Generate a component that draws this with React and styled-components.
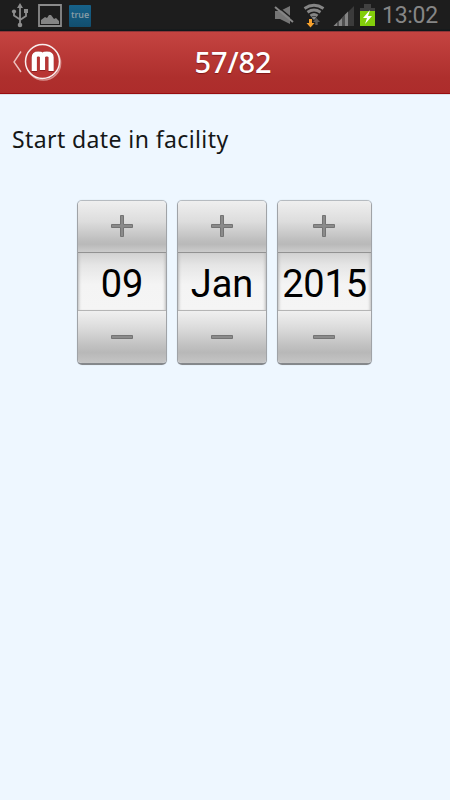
import React from "react";
import styled, { createGlobalStyle } from "styled-components";

const GlobalStyle = createGlobalStyle`
  * { box-sizing: border-box; }
  body { margin: 0; background: #eef7ff; }
`;

const Screen = styled.div`
  display: flex;
  flex-direction: column;
  width: 450px;
  height: 800px;
  overflow: hidden;
  background: #eef7ff;
`;

const StatusBar = styled.div`
  display: flex;
  justify-content: space-between;
  flex: none;
  height: 31px;
  background: linear-gradient(#1d1d1d 0 29px, #10181b 30px);
`;

const StatusGroup = styled.div`
  display: flex;
  align-items: flex-start;
`;

const StatusSvg = styled.svg`
  display: block;
  flex: none;
`;

const TrueBadge = styled.div`
  display: flex;
  justify-content: center;
  width: 22px;
  height: 22px;
  margin-top: 5px;
  border-radius: 1px;
  background: linear-gradient(#17628a, #124e6e);
  color: #8a9da7;
  font: 600 9px/20px "Open Sans", sans-serif;
  letter-spacing: -0.1px;
`;

const Clock = styled.div`
  width: 68px;
  color: #868686;
  font: 400 23px/31px Roboto, sans-serif;
  letter-spacing: -0.3px;
`;

const Header = styled.header`
  display: grid;
  grid-template-columns: 64px 1fr 48px;
  flex: none;
  height: 63px;
  border-top: 1px solid #8e3437;
  border-bottom: 1px solid #980d10;
  background: linear-gradient(#c54441, #ae2f2d 75%, #ad2c2b);
`;

const Title = styled.h1`
  margin: 0;
  color: #fff;
  text-align: center;
  font: 500 29px/60px "Noto Sans", sans-serif;
  letter-spacing: -0.1px;
  text-shadow: 0 1px 1px rgba(80, 0, 0, 0.5);
`;

const Content = styled.main`
  display: flex;
  flex-direction: column;
  border-top: 1px solid #dce1e8;
`;

const Question = styled.p`
  margin: 26px 0 0 12px;
  color: #151718;
  font: 400 23px/36px "Noto Sans", sans-serif;
  letter-spacing: ${(p) => p.$tracking};
  white-space: nowrap;
`;

const DatePicker = styled.div`
  display: flex;
  gap: 10px;
  margin: 43px 0 0 77px;
`;

const Picker = styled.div`
  display: flex;
  flex-direction: column;
  width: ${(p) => p.$width}px;
  height: 165px;
  overflow: hidden;
  border: 1px solid #a0a3a7;
  border-top-color: #b6bbc0;
  border-bottom: 2px solid #85888b;
  border-radius: 5px;
  box-shadow: 0 0 1px rgba(100, 120, 140, 0.35);
`;

const StepButton = styled.button`
  display: flex;
  justify-content: center;
  align-items: flex-start;
  flex: none;
  height: ${(p) => (p.$down ? 52 : 51)}px;
  padding: ${(p) => (p.$down ? 14 : 13)}px ${(p) => p.$nudge || 0}px 0 0;
  border: 0;
  background: ${(p) =>
    p.$down
      ? "linear-gradient(#f0f0f0, #dddddd 30%, #c2c2c2 65%, #b8b8b8 80%, #c5c5c5)"
      : "linear-gradient(#efefef, #dddddd 40%, #bdbdbd 78%, #b9b9b9 85%, #cccccc)"};
`;

const Value = styled.div`
  flex: none;
  height: 59px;
  border-top: 1px solid #929292;
  border-bottom: 1px solid #b5b5b5;
  background: linear-gradient(#d2d2d2, #e6e6e6 22%, #f4f4f4 55%, #f5f5f5);
  box-shadow: inset 3px 0 3px -2px #bbb, inset -3px 0 3px -2px #bbb;
  color: #000;
  text-align: center;
  white-space: nowrap;
  font: 400 38px/62px Roboto, sans-serif;
  letter-spacing: ${(p) => p.$tracking || 0}px;
`;

function UsbIcon() {
  return (
    <StatusSvg width="38" height="31" viewBox="0 0 38 31" fill="none" stroke="#8d8d8d" strokeWidth="1.8">
      <path d="M20 7v17M14 12v3.5l6 4M26 11v5l-6 4" />
      <g fill="#8d8d8d" stroke="none">
        <path d="m20 3 3 5h-6zM24 9h4v4h-4z" />
        <circle cx="14" cy="11.5" r="2.1" />
        <circle cx="20" cy="25" r="2.3" />
      </g>
    </StatusSvg>
  );
}

function PictureIcon() {
  return (
    <StatusSvg width="31" height="31" viewBox="38 0 31 31">
      <path d="M39 5h22v21H39z" fill="none" stroke="#8b8b8b" strokeWidth="1.8" />
      <path d="M41 24v-4l4-3 2 1 2-3h2l3 4 2-1 3 3v3z" fill="#858585" />
    </StatusSvg>
  );
}

function SystemIcons() {
  return (
    <StatusSvg width="112" height="31" viewBox="270 0 112 31">
      <path d="M275 11h5l10-5v18l-10-5h-5z" fill="#757575" />
      <path d="m277 6 17 14" stroke="#1d1d1d" strokeWidth="1.5" />
      <path d="m275 7 18 15" stroke="#858585" strokeWidth="2" />
      <g fill="none" stroke="#858585" strokeWidth="2.9">
        <path d="M304.5 8.5q9.5-6.4 19 0" />
        <path d="M307.5 12.2q6.5-4.4 13 0" />
        <path d="M310.5 15.8q3.5-2.6 7 0" />
      </g>
      <path d="m311.5 17.5 2.5-1 2.5 1-2.5 2.5z" fill="#888" />
      <path d="M309 19h3v4h2.5l-4 4.5-4-4.5h2.5z" fill="#f6a12d" />
      <path d="m316.5 18 3.5 4h-2.3v3h-2.4v-3H313z" fill="#5b5b5b" />
      <path d="M354 6v20h-6V12z" fill="#3b3b3b" />
      <path d="M333.5 26l4-4v4zM339 21l3-3v8h-3zM344.5 15l3.5-3.5V26h-3.5z" fill="#858585" />
      <path d="M337.5 22l1.5-1.5V26h-1.5zM342 17.5l2.5-2.5v11H342z" fill="#505050" />
      <path d="M364 4h7v4h4v4h-15V8h4z" fill="#414141" />
      <path d="M360 11h15v15h-15z" fill="#83ce0b" />
      <path d="m370 10-7 8h4l-2 6 7-8h-4z" fill="#fff" />
    </StatusSvg>
  );
}

function BrandLogo() {
  return (
    <StatusSvg width="64" height="61" viewBox="0 32 64 61" fill="none">
      <path d="m21 51.5-7 10.5 7 10" stroke="#edc0bd" strokeWidth="1.4" />
      <circle cx="43.5" cy="63" r="17" stroke="#d88f8d" strokeWidth="1.7" />
      <circle cx="42.5" cy="61.5" r="17" fill="#b83534" stroke="#f8eeee" strokeWidth="1.5" />
      <path
        d="M34.3 72V57.5q0-3.5 4-3.5 4.2 0 4.2 3.5V71M42.5 57.5q0-3.5 4.3-3.5t4.3 3.5V72"
        stroke="#8f2020" strokeWidth="5.5"
      />
      <path
        d="M34.3 71V57.3q0-3.3 4-3.3 4.2 0 4.2 3.3V70M42.5 57.3q0-3.3 4.3-3.3t4.3 3.3V71"
        stroke="#fff" strokeWidth="5.2"
      />
    </StatusSvg>
  );
}

function StepIcon({ plus }) {
  return (
    <StatusSvg width="24" height="24" viewBox="0 0 24 24">
      <path
        d={plus
          ? "M10.5 1.5h3v9h9v3h-9v9h-3v-9h-9v-3h9z"
          : "M1.5 10.5h21v3h-21z"}
        fill="#8b8b8b" stroke="#747474" strokeWidth="1" strokeLinejoin="round"
      />
    </StatusSvg>
  );
}

function DateField({ value, width, tracking, label, nudge }) {
  return (
    <Picker $width={width}>
      <StepButton $nudge={nudge} aria-label={`Increase ${label}`}>
        <StepIcon plus />
      </StepButton>
      <Value $tracking={tracking}>{value}</Value>
      <StepButton $down $nudge={nudge} aria-label={`Decrease ${label}`}>
        <StepIcon />
      </StepButton>
    </Picker>
  );
}

export default function App() {
  return (
    <Screen>
      <GlobalStyle />
      <StatusBar>
        <StatusGroup>
          <UsbIcon />
          <PictureIcon />
          <TrueBadge>true</TrueBadge>
        </StatusGroup>
        <StatusGroup>
          <SystemIcons />
          <Clock>13:02</Clock>
        </StatusGroup>
      </StatusBar>
      <Header>
        <BrandLogo />
        <Title>57/82</Title>
      </Header>
      <Content>
        <Question $tracking="0.4px">Start date in facility</Question>
        <DatePicker>
          <DateField value="09" width={90} label="day" nudge={1} />
          <DateField value="Jan" width={90} label="month" nudge={1} />
          <DateField value="2015" width={95} label="year" tracking={-0.2} nudge={2} />
        </DatePicker>
      </Content>
    </Screen>
  );
}
